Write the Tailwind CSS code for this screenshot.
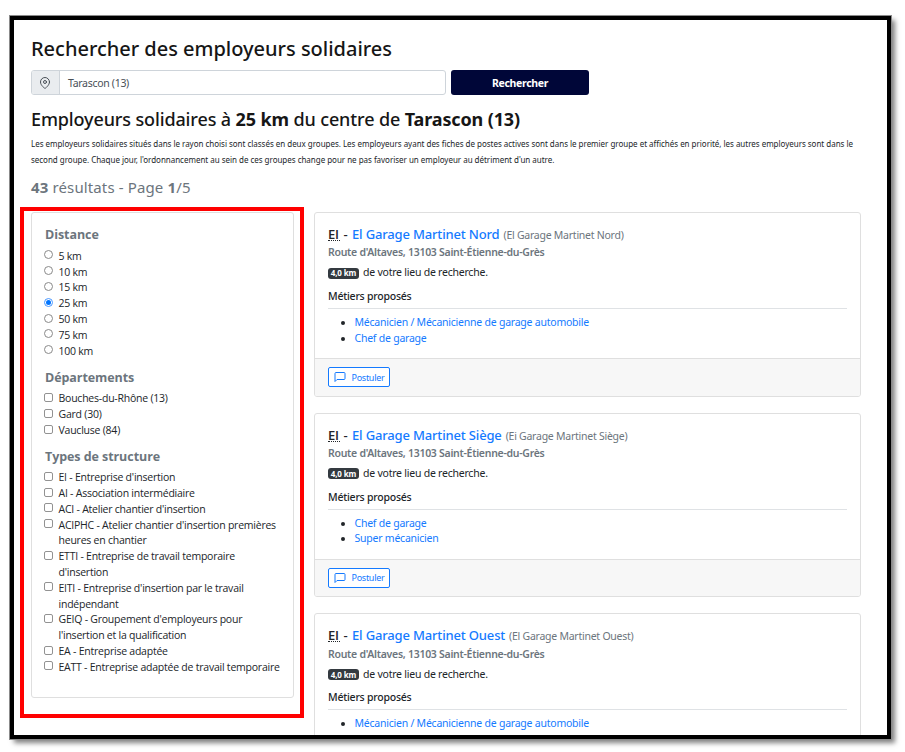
<!DOCTYPE html>
<html lang="fr">
<head>
<meta charset="utf-8">
<title>Rechercher des employeurs solidaires</title>
<script src="https://cdn.jsdelivr.net/npm/@tailwindcss/browser@4"></script>
</head>
<body class="bg-white h-[752px] overflow-hidden pl-[9px] pt-[15px] font-['Noto_Sans','Open_Sans',sans-serif] text-[10.5px] leading-[15.8px] tracking-[-0.23px] text-[#212529]">
<div class="relative w-[883px] h-[725px] border border-[#8a8a8a] bg-black p-1 shadow-[4px_4px_5px_-1px_rgba(0,0,0,0.5)]">
<main class="h-[715px] w-[873px] overflow-hidden bg-white pl-[17px] pt-[15px]">
  <h1 class="h-[35px] pt-px text-[20px] leading-[26px] font-medium tracking-[-0.016px] text-[#161616] whitespace-nowrap">Rechercher des employeurs solidaires</h1>
  <form class="flex h-[25px] gap-[5px]">
    <div class="flex w-[415px] rounded-[3px] border border-[#ced4da] overflow-hidden">
      <span class="flex w-[28px] items-center justify-center border-r border-[#ced4da] bg-[#e9ecef] pr-[2px]">
        <svg class="size-3" viewBox="0 0 24 24" fill="none" stroke="#495057" stroke-width="2" stroke-linecap="round" stroke-linejoin="round"><path d="M21 10c0 7-9 13-9 13s-9-6-9-13a9 9 0 0 1 18 0z"/><circle cx="12" cy="10" r="3"/></svg>
      </span>
      <span class="flex items-center pl-2 pt-[2px] tracking-[-0.3px] text-[#495057]">Tarascon (13)</span>
    </div>
    <button type="button" class="w-[138px] rounded-[3px] bg-[#000638] pt-[3px] font-bold tracking-[-0.336px] text-white">Rechercher</button>
  </form>
  <h2 class="mt-[11px] h-[30px] text-[18px] leading-[26px] font-medium tracking-[-0.129px] text-[#161616] whitespace-nowrap">Employeurs solidaires à <b>25 km</b> du centre de <b>Tarascon (13)</b></h2>
  <p class="text-[8px] leading-[15.8px] tracking-[-0.022px] whitespace-nowrap">Les employeurs solidaires situés dans le rayon choisi sont classés en deux groupes. Les employeurs ayant des fiches de postes actives sont dans le premier groupe et affichés en priorité, les autres employeurs sont dans le<br>second groupe. Chaque jour, l'ordonnancement au sein de ces groupes change pour ne pas favoriser un employeur au détriment d'un autre.</p>
  <p class="mt-[7px] h-[37.4px] text-[15px] leading-[24px] tracking-[0.13px] text-[#6c757d]"><b>43</b> résultats - Page <b>1</b>/5</p>
  <div class="flex items-start gap-5">
    <aside class="h-[486.5px] w-[263px] rounded-[3px] border border-[#dfdfdf] px-[13px] pt-[14.4px] font-['Open_Sans','Noto_Sans',sans-serif] whitespace-nowrap">
      <h3 class="mb-[5px] text-[12.5px] leading-4 font-bold tracking-[-0.07px] text-[#6c757d]">Distance</h3>
      <ul id="distance"></ul>
      <h3 class="mt-[11px] mb-[5px] text-[12.5px] leading-4 font-bold tracking-[-0.07px] text-[#6c757d]">Départements</h3>
      <ul id="departments"></ul>
      <h3 class="mt-[10.5px] mb-[5px] text-[12.5px] leading-4 font-bold tracking-[-0.07px] text-[#6c757d]">Types de structure</h3>
      <ul id="kinds"></ul>
    </aside>
    <section id="cards" class="flex w-[546.5px] flex-col gap-4"></section>
  </div>
</main>
<div class="absolute left-[10px] top-[191px] h-[511px] w-[284px] border-4 border-[#ff0000]"></div>
</div>
<script>
const radio = on => on
  ? '<span class="-ml-px mt-[2px] flex size-[9px] shrink-0 items-center justify-center rounded-full border border-[#4a98ff] bg-white"><i class="size-[5px] rounded-full bg-[#0075ff]"></i></span>'
  : '<span class="-ml-px mt-[2px] size-[9px] shrink-0 rounded-full border border-[#8a8a8a] bg-white"></span>';
const box = '<span class="-ml-px mt-[2px] size-[9px] shrink-0 rounded-[2px] border border-[#929292] bg-white"></span>';
const row = (mark, text) => `<li class="flex gap-[5.5px]">${mark}<span class="pt-[0.4px] -mb-[0.4px]">${text}</span></li>`;
document.getElementById('distance').innerHTML =
  [5, 10, 15, 25, 50, 75, 100].map(d => row(radio(d === 25), d + ' km')).join('');
document.getElementById('departments').innerHTML =
  ['Bouches-du-Rhône (13)', 'Gard (30)', 'Vaucluse (84)'].map(t => row(box, t)).join('');
document.getElementById('kinds').innerHTML = [
  "EI - Entreprise d'insertion", "AI - Association intermédiaire", "ACI - Atelier chantier d'insertion",
  "ACIPHC - Atelier chantier d'insertion premières<br>heures en chantier",
  "ETTI - Entreprise de travail temporaire<br>d'insertion",
  "EITI - Entreprise d'insertion par le travail<br>indépendant",
  "GEIQ - Groupement d'employeurs pour<br>l'insertion et la qualification",
  "EA - Entreprise adaptée", "EATT - Entreprise adaptée de travail temporaire"
].map(t => row(box, t)).join('');

const cards = [
  ['El Garage Martinet Nord', 'El Garage Martinet Nord', ['Mécanicien / Mécanicienne de garage automobile', 'Chef de garage']],
  ['El Garage Martinet Siège', 'Ei Garage Martinet Siège', ['Chef de garage', 'Super mécanicien']],
  ['El Garage Martinet Ouest', 'El Garage Martinet Ouest', ['Mécanicien / Mécanicienne de garage automobile']]
];
document.getElementById('cards').innerHTML = cards.map(([name, alias, jobs]) => `
<article class="flex h-[184.6px] shrink-0 flex-col rounded-[3px] border border-[#dfdfdf] whitespace-nowrap overflow-hidden">
  <div class="flex-1 px-[13px] pt-3">
    <h3 class="flex h-[18px] items-baseline leading-[18px] text-[13px] font-medium tracking-[-0.164px]"><abbr class="w-[11.5px] border-b border-dotted border-[#212529] font-['Open_Sans','Noto_Sans',sans-serif] leading-[12px] font-semibold no-underline">EI</abbr><span class="ml-1 mr-[4.5px]">-</span><a class="text-[#147aff]">${name}</a><small class="ml-1 text-[10.5px] font-normal tracking-[-0.25px] text-[#6c757d]">(${alias})</small></h3>
    <p class="mt-[2.4px] font-semibold tracking-[-0.278px] text-[#6c757d]">Route d'Altaves, 13103 Saint-Étienne-du-Grès</p>
    <p class="mt-[4.2px] flex items-center"><span class="mr-1 flex h-[11px] w-[31px] items-center justify-center rounded-[3px] bg-[#343a40] text-[8px] font-bold tracking-[-0.13px] text-white">4,0 km</span>de votre lieu de recherche.</p>
    <h4 class="mt-2 border-b border-[#dfe2e5] pb-[3px] font-medium">Métiers proposés</h4>
    <ul class="mt-1.5 list-disc pl-[26.5px] marker:text-[#212529]">${jobs.map(j => `<li><a class="text-[#147aff]">${j}</a></li>`).join('')}</ul>
  </div>
  <footer class="flex h-[37.2px] items-center border-t border-[#dfdfdf] bg-[#f7f7f7] px-[13px]">
    <button type="button" class="flex h-[20px] w-[62px] items-center gap-[5.5px] rounded-[2px] border border-[#147aff] bg-white pl-[5px] text-[9px] tracking-[-0.27px] text-[#147aff]"><svg class="size-3" viewBox="0 0 24 24" fill="none" stroke="currentColor" stroke-width="2" stroke-linejoin="round"><path d="M22 15a2 2 0 0 1-2 2H6l-4 4V5a2 2 0 0 1 2-2h16a2 2 0 0 1 2 2z"/></svg>Postuler</button>
  </footer>
</article>`).join('');
</script>
</body>
</html>
